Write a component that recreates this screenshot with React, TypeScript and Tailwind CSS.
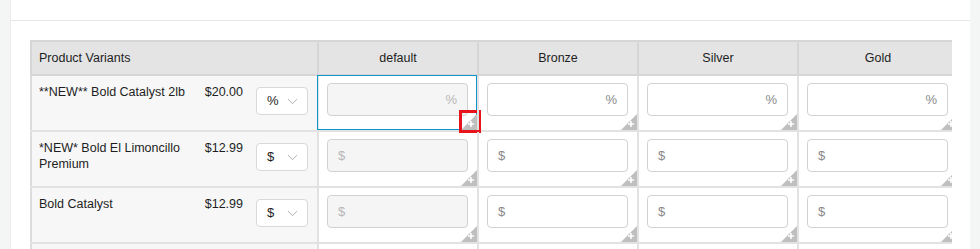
import { ChevronDown } from "lucide-react";

type Row = {
  name: string;
  price: string;
  unit: "%" | "$";
};

const rows: Row[] = [
  { name: "**NEW** Bold Catalyst 2lb", price: "$20.00", unit: "%" },
  { name: "*NEW* Bold El Limoncillo Premium", price: "$12.99", unit: "$" },
  { name: "Bold Catalyst", price: "$12.99", unit: "$" },
];

const tiers = ["default", "Bronze", "Silver", "Gold"];

function Corner({ marked }: { marked?: boolean }) {
  return (
    <>
      <svg width="16" height="16" viewBox="0 0 16 16" className="absolute bottom-0 right-0 block">
        <polygon points="16,0 16,16 0,16" fill="#bfbfbf" />
        <path d="M10 7v6M7 10h6" stroke="#fff" strokeWidth="1.6" />
      </svg>
      {marked && (
        <div className="absolute -bottom-[3px] -right-[4px] h-[23px] w-[22px] border-[3px] border-[#e8141b]" />
      )}
    </>
  );
}

function PriceInput({ unit, disabled }: { unit: "%" | "$"; disabled: boolean }) {
  return (
    <div
      className={`flex h-[33px] w-[141px] items-center rounded-[4px] border border-[#d2d2d2] px-[10px] text-[13px] ${
        disabled ? "bg-[#f5f5f5] text-[#b8b8b8]" : "bg-white text-[#8a8a8a]"
      } ${unit === "%" ? "justify-end" : "justify-start"}`}
    >
      {unit}
    </div>
  );
}

export default function App() {
  return (
    <div
      className="flex h-[249px] w-[980px] overflow-hidden bg-[#f4f5f5] pl-[10px] text-[#1e1e1e]"
      style={{ fontFamily: "'Liberation Sans', Arial, sans-serif" }}
    >
      <div className="flex w-[960px] flex-col border-l border-[#ececec] bg-white">
        <div className="h-[21px] shrink-0 border-b border-[#e6e6e6]" />
        <div className="ml-[19px] mt-[19px] w-[922px] overflow-hidden">
          <div className="w-[927px]">
            {/* header */}
            <div className="flex h-[36px] border-y-2 border-[#d6d6d6] bg-[#e4e4e4] text-[12.5px]">
              <div className="flex w-[287px] shrink-0 items-center border-l-2 border-[#d6d6d6] pl-[7px]">
                Product Variants
              </div>
              {tiers.map((t) => (
                <div
                  key={t}
                  className="flex w-[160px] shrink-0 items-center justify-center border-l-2 border-[#d6d6d6]"
                >
                  {t}
                </div>
              ))}
            </div>

            {rows.map((row, i) => (
              <div key={row.name} className="flex h-[56px] border-b-2 border-[#e2e2e2]">
                <div className="flex w-[287px] shrink-0 items-start border-l-2 border-[#dcdcdc] bg-[#f7f7f7] pl-[7px] pr-[9px] pt-[8px] text-[12.5px] leading-[16px]">
                  <div className="w-[160px]">{row.name}</div>
                  <div className="ml-auto">{row.price}</div>
                  <div className="ml-[13px] mt-[3px] flex h-[28px] w-[52px] items-center justify-between rounded-[4px] border border-[#d9d9d9] bg-white pl-[10px] pr-[6px] text-[13px]">
                    <span>{row.unit}</span>
                    <ChevronDown className="h-[17px] w-[17px] text-[#8c8c8c]" strokeWidth={1} />
                  </div>
                </div>
                {tiers.map((t, j) => (
                  <div
                    key={t}
                    className="relative w-[160px] shrink-0 border-l-2 border-[#e2e2e2] pl-[8px] pt-[7px]"
                  >
                    {i === 0 && j === 0 && (
                      <div className="absolute -left-[2px] -top-[1px] bottom-0 right-0 border border-[#0e97c7]" />
                    )}
                    <PriceInput unit={row.unit} disabled={j === 0} />
                    <Corner marked={i === 0 && j === 0} />
                  </div>
                ))}
              </div>
            ))}
            <div className="flex h-[20px]">
              <div className="w-[287px] shrink-0 border-l-2 border-[#dcdcdc] bg-[#f7f7f7]" />
              {tiers.map((t) => (
                <div key={t} className="w-[160px] shrink-0 border-l-2 border-[#e2e2e2]" />
              ))}
            </div>
          </div>
        </div>
      </div>
    </div>
  );
}
